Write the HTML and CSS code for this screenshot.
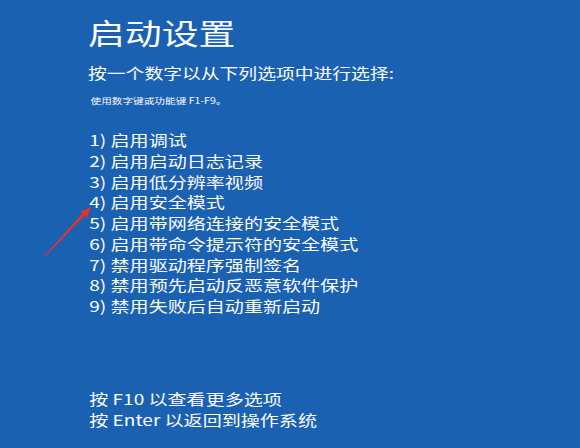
FILE: index.html
```html
<!DOCTYPE html>
<html lang="zh-CN">
<head>
<meta charset="utf-8">
<title>启动设置</title>
<link rel="stylesheet" href="styles.css">
</head>
<body>
<div class="screen">
  <div class="content">
    <h1 class="title">启动设置</h1>
    <p class="prompt">按一个数字以从下列选项中进行选择:</p>
    <p class="hint">使用数字键或功能键 F1-F9。</p>
    <ol class="options">
      <li>1) 启用调试</li>
      <li>2) 启用启动日志记录</li>
      <li>3) 启用低分辨率视频</li>
      <li>4) 启用安全模式</li>
      <li>5) 启用带网络连接的安全模式</li>
      <li>6) 启用带命令提示符的安全模式</li>
      <li>7) 禁用驱动程序强制签名</li>
      <li>8) 禁用预先启动反恶意软件保护</li>
      <li>9) 禁用失败后自动重新启动</li>
    </ol>
    <div class="footer">
      <p class="line">按 F10 以查看更多选项</p>
      <p class="line">按 Enter 以返回到操作系统</p>
    </div>
  </div>
  <svg class="arrow" width="580" height="448" viewBox="0 0 580 448" aria-hidden="true">
    <polygon points="43.6,256.7 82.4,213.5 80.2,211.9 91,207 86.8,218.1 84.6,215.5 44.4,257.3" fill="#e8312a"/>
  </svg>
</div>
</body>
</html>
```
FILE: styles.css
```css
html, body {
  margin: 0;
  padding: 0;
  background: #1b61b2;
}
body {
  width: 580px;
  height: 448px;
  overflow: hidden;
  font-family: "Noto Sans CJK SC", "Microsoft YaHei", "Noto Sans", sans-serif;
  color: #fbfcfe;
}
.screen {
  position: relative;
  width: 580px;
  height: 448px;
  box-sizing: border-box;
  padding: 15px 0 0 88px;
  overflow: hidden;
}
.content {
  width: max-content;
  transform: scaleX(1.27);
  transform-origin: 0 0;
  white-space: nowrap;
}
.title {
  margin: 0;
  font-size: 29px;
  line-height: 34px;
  font-weight: 400;
}
.prompt {
  margin: 13px 0 0;
  font-size: 14.8px;
  line-height: 21px;
}
.hint {
  margin: 10px 0 0 2px;
  font-size: 8.4px;
  line-height: 14px;
}
.options {
  list-style: none;
  margin: 23px 0 0 1px;
  padding: 0;
  font-size: 15px;
  line-height: 20.75px;
}
.footer {
  margin-top: 72px;
  font-size: 15px;
  line-height: 20.75px;
}
.line {
  margin: 0;
  padding-left: 1px;
}
.arrow {
  position: absolute;
  left: 0;
  top: 0;
  pointer-events: none;
}
```
